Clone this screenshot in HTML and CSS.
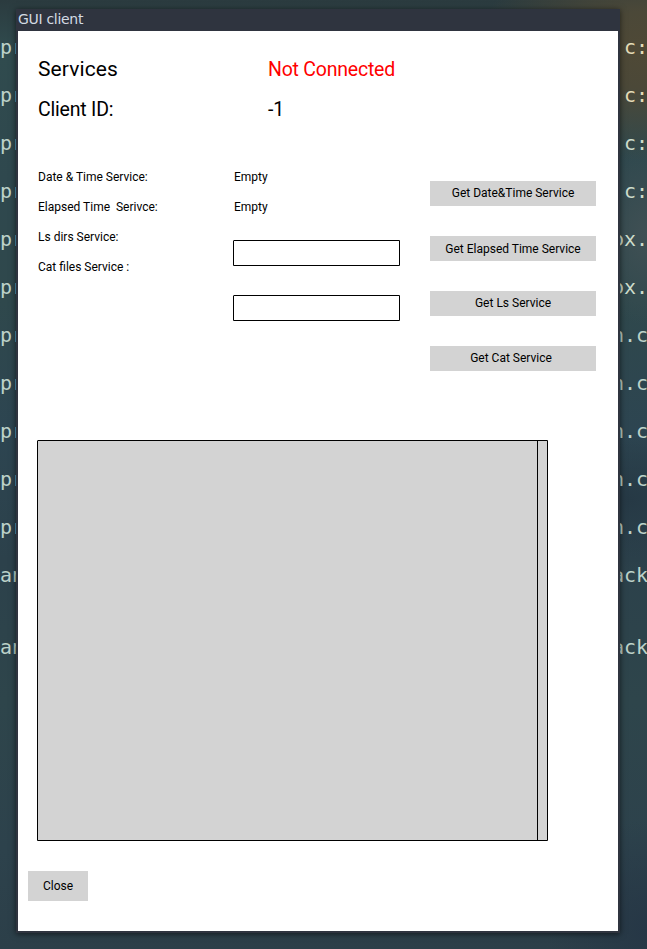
FILE: index.html
```html
<!DOCTYPE html>
<html lang="en">
<head>
<meta charset="utf-8">
<title>GUI client</title>
<link rel="stylesheet" href="styles.css">
</head>
<body>
<div class="desktop">
  <div class="terminal">
    <div class="line"><span>pr</span><span>c:</span></div>
    <div class="line"><span>pr</span><span>c:</span></div>
    <div class="line"><span>pr</span><span>c:</span></div>
    <div class="line"><span>pr</span><span>c:</span></div>
    <div class="line"><span>pr</span><span>ox.</span></div>
    <div class="line"><span>pr</span><span>ox.</span></div>
    <div class="line"><span>pr</span><span>n.c</span></div>
    <div class="line"><span>pr</span><span>n.c</span></div>
    <div class="line"><span>pr</span><span>n.c</span></div>
    <div class="line"><span>pr</span><span>n.c</span></div>
    <div class="line"><span>pr</span><span>n.c</span></div>
    <div class="line tall"><span>an</span><span>ack</span></div>
    <div class="line"><span>an</span><span>ack</span></div>
  </div>
  <main class="window">
    <header class="titlebar">GUI client</header>
    <div class="client">
      <div class="status">
        <span class="heading">Services</span><span class="offline">Not Connected</span>
        <span class="name">Client ID:</span><span class="name">-1</span>
      </div>
      <div class="services">
        <div class="labels">
          <span>Date &amp; Time Service:</span>
          <span>Elapsed Time&nbsp; Serivce:</span>
          <span>Ls dirs Service:</span>
          <span>Cat files Service :</span>
        </div>
        <div class="values">
          <span>Empty</span>
          <span>Empty</span>
          <input class="field" type="text" aria-label="Ls dirs">
          <input class="field" type="text" aria-label="Cat files">
        </div>
        <div class="actions">
          <button>Get Date&amp;Time Service</button>
          <button class="elapsed">Get Elapsed Time Service</button>
          <button>Get Ls Service</button>
          <button class="cat">Get Cat Service</button>
        </div>
      </div>
      <div class="output"><div class="text"></div><div class="scroll"></div></div>
      <button class="close">Close</button>
    </div>
  </main>
</div>
</body>
</html>
```
FILE: styles.css
```css
* { box-sizing: border-box; }
body { margin: 0; }
.desktop {
  display: grid;
  width: 647px;
  height: 949px;
  overflow: hidden;
  background:
    radial-gradient(ellipse 170px 110px at 647px 50px, #4f4936 0, #4b4838 35%, transparent 100%),
    radial-gradient(ellipse 90px 70px at 630px 500px, #263945 0, transparent 100%),
    radial-gradient(ellipse 100px 110px at 647px 930px, #263746 0, transparent 100%),
    radial-gradient(ellipse 60px 90px at 647px 235px, #405054 0, transparent 100%),
    linear-gradient(#2b3b3f 0, #304b4e 50px, #2f484e 180px, #2f484c 300px, #2d4551 430px, #2c414b 560px, #2e454b 700px, #2d424c 850px, #2c3f49 949px);
}
.terminal, .window { grid-area: 1 / 1; }
.terminal {
  padding-top: 35px;
  font: 20px/24px "DejaVu Sans Mono", monospace;
  letter-spacing: -0.04px;
  color: #bdd2c9;
}
.line { display: flex; justify-content: space-between; width: 648px; height: 48px; }
.line.tall { height: 72px; }
.line:nth-child(-n+2) span:last-child { color: #e4dcb8; }
.line:nth-child(n+3):nth-child(-n+6) span:last-child { color: #cddccb; }
.window {
  display: flex;
  flex-direction: column;
  width: 604px;
  height: 924px;
  margin: 9px 0 0 16px;
  padding: 0 2px 2px;
  background: #2f343f;
  box-shadow: 0 1px 6px rgba(0, 0, 0, .6);
}
.titlebar {
  height: 22px;
  font: 14px/20px "DejaVu Sans", sans-serif;
  letter-spacing: -0.3px;
  color: #d3dae3;
}
.client {
  display: flex;
  flex-direction: column;
  align-items: flex-start;
  width: 600px;
  height: 900px;
  padding-top: 18px;
  background: #fff;
  font: 12px/30px Roboto, sans-serif;
  color: #000;
}
.status {
  display: grid;
  grid-template-columns: 230px auto;
  grid-auto-rows: 40px;
  margin-left: 20px;
  font-size: 19.5px;
  line-height: 41px;
}
.heading { font-size: 21px; line-height: 40px; letter-spacing: 0.1px; }
.name { letter-spacing: -0.2px; }
.offline { letter-spacing: -0.22px; color: #f00; }
.services {
  display: flex;
  height: 190px;
  margin: 33px 0 0 20px;
}
.labels, .values, .actions { display: flex; flex-direction: column; }
.labels { width: 195px; }
.values { width: 197px; }
.values span { padding-left: 1px; }
.field {
  width: 167px;
  height: 26px;
  margin: 18px 0 11px;
  padding: 0 4px;
  border: 1px solid #000;
  border-top-left-radius: 1px;
  background: #fff;
}
.actions { gap: 30px; padding-top: 19px; }
button {
  width: 166px;
  height: 25px;
  padding: 0;
  border: 0;
  background: #d3d3d3;
  font: 12px/25px Roboto, sans-serif;
  color: #000;
}
.elapsed { padding-top: 1px; }
.cat { padding-right: 4px; }
.output {
  display: flex;
  width: 511px;
  height: 401px;
  margin: 88px 0 30px 19px;
  border: 1px solid #000;
  border-top-left-radius: 1px;
  background: #d3d3d3;
}
.text { flex: 1; border-right: 1px solid #000; }
.scroll { width: 9px; }
.close { width: 60px; height: 30px; margin-left: 10px; line-height: 30px; }
```
